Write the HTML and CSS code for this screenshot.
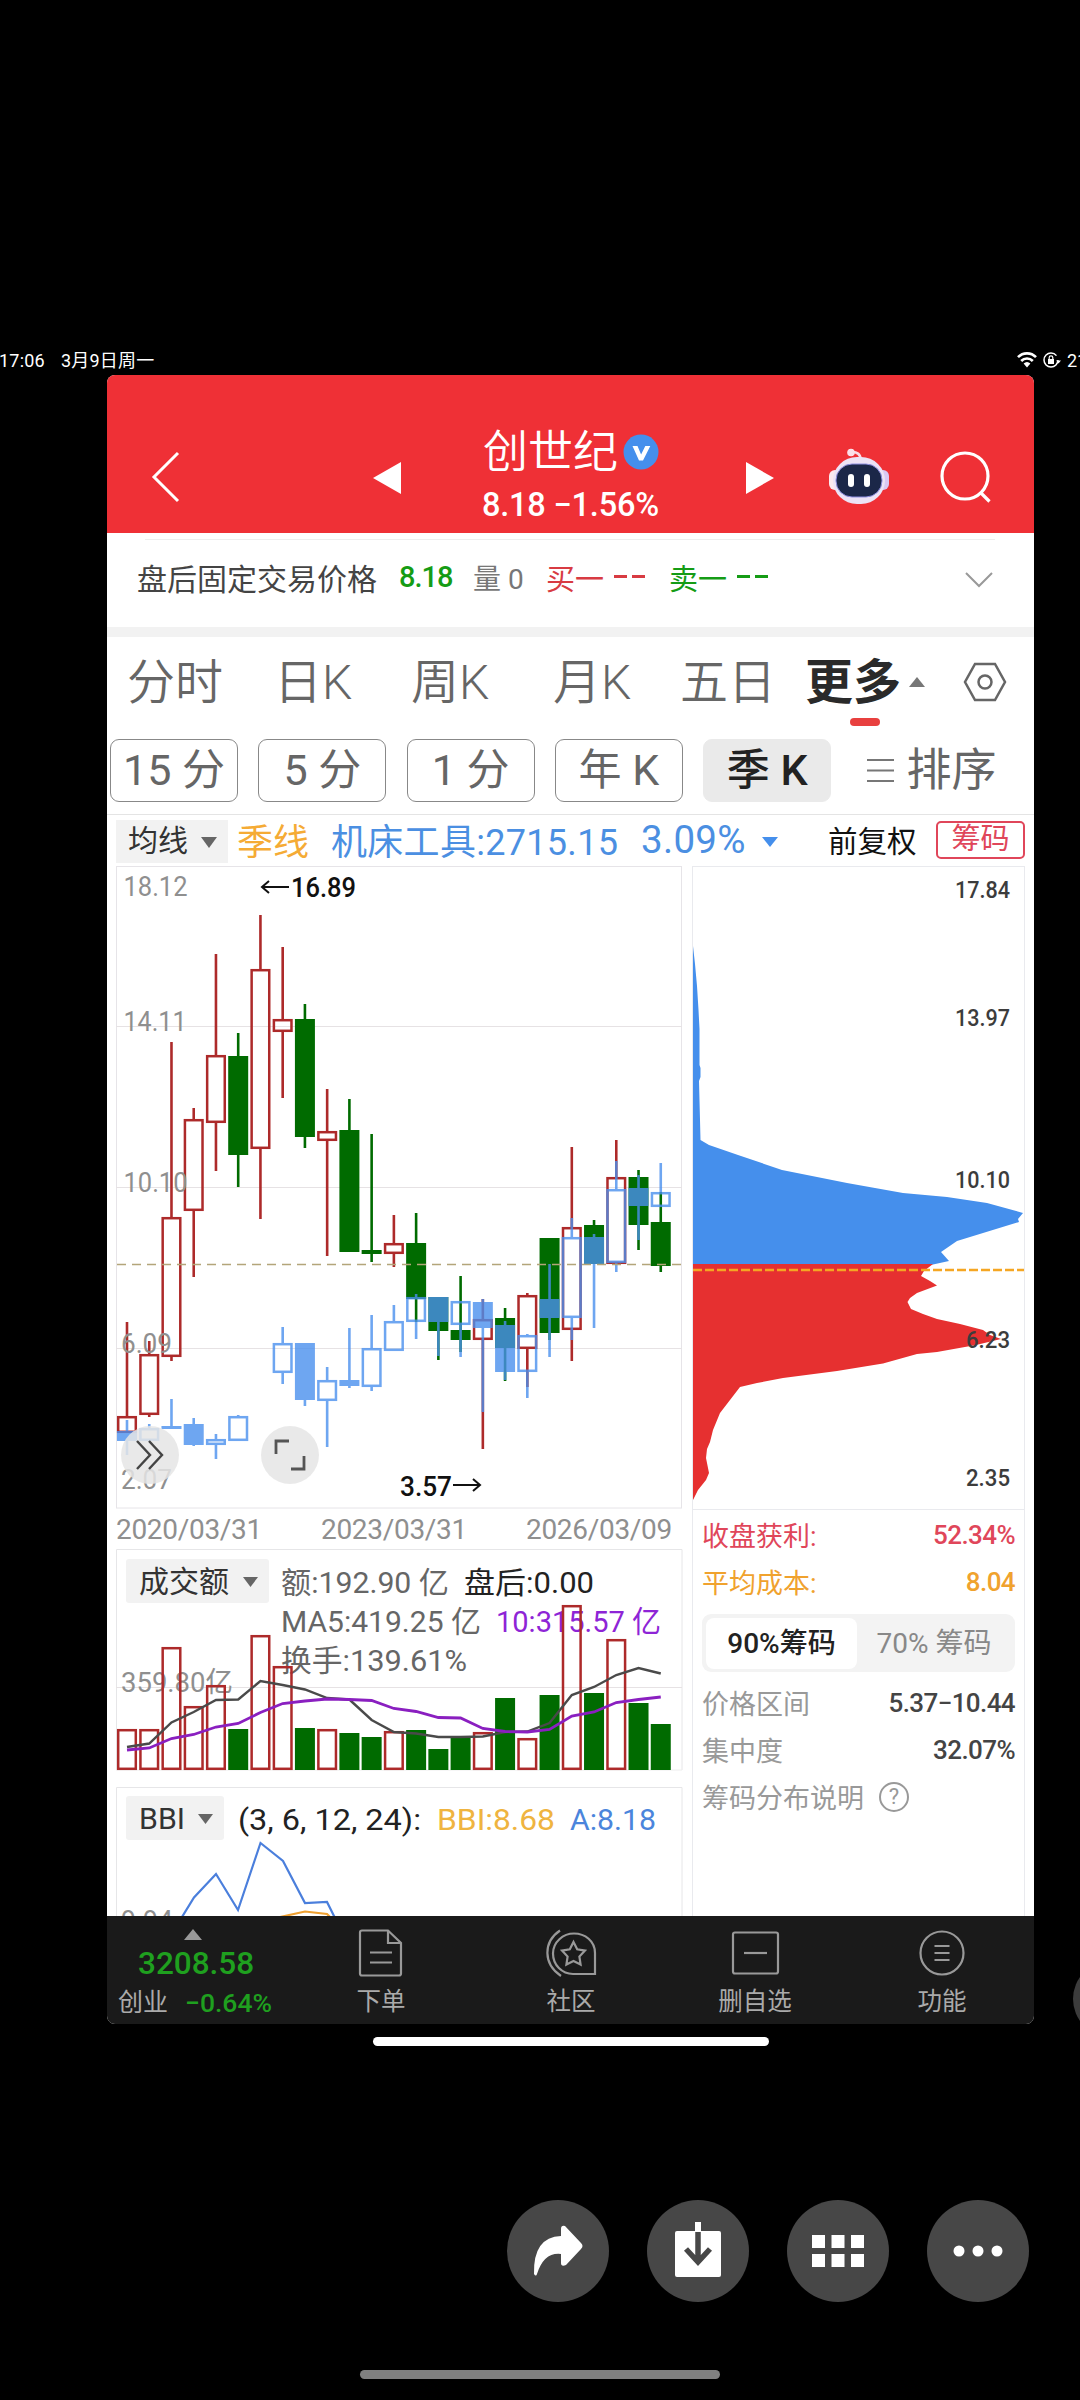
FILE: index.html
```html
<!DOCTYPE html>
<html lang="zh-CN">
<head>
<meta charset="utf-8">
<title>创世纪 8.18</title>
<link rel="stylesheet" href="styles.css">
</head>
<body>
<div class="status">
  <span class="status-time">17:06</span>
  <span class="status-date">3月9日周一</span>
  <svg class="status-icons" width="44" height="18" viewBox="0 0 44 18">
    <g fill="none" stroke="#fff" stroke-width="2.6"><path d="M1 6.2a12.5 12.5 0 0 1 18 0M4.2 10a8 8 0 0 1 11.6 0"/></g>
    <path d="M6.6 12.6a5 5 0 0 1 6.8 0L10 16.5z" fill="#fff"/>
    <circle cx="34" cy="9" r="7" fill="none" stroke="#fff" stroke-width="1.5" stroke-dasharray="39 5"/>
    <rect x="31" y="8" width="6" height="5" fill="#fff"/><path d="M32.2 8V6.6a1.8 1.8 0 0 1 3.6 0V8" fill="none" stroke="#fff" stroke-width="1.2"/>
    <path d="M39 9.5h5l-2.5 3z" fill="#fff"/>
  </svg>
  <span class="status-batt">21</span>
</div>

<main class="app">
  <header class="header">
    <svg class="back" width="30" height="52" viewBox="0 0 30 52"><path d="M27 2 3 26l24 24" fill="none" stroke="#fff" stroke-width="3"/></svg>
    <svg class="prev" width="28" height="32" viewBox="0 0 28 32"><path d="M28 0v32L0 16z" fill="#fff"/></svg>
    <div class="title">
      <div class="name">创世纪<svg width="36" height="36" viewBox="0 0 36 36"><circle cx="18" cy="18" r="17.5" fill="#458fec"/><path d="M9.5 12h5l3.6 8.5 4.2-8.5h5L20 26.500h-4z" fill="#fff"/></svg></div>
      <div class="quote">8.18 −1.56%</div>
    </div>
    <svg class="next" width="28" height="32" viewBox="0 0 28 32"><path d="M0 0v32l28-16z" fill="#fff"/></svg>
    <svg class="bot" width="60" height="58" viewBox="0 0 60 58">
      <path d="M22 4q9-1 10 8" fill="none" stroke="#f9dbe6" stroke-width="2.500"/><circle cx="22" cy="4.500" r="3.800" fill="#fbdfe9"/>
      <rect x="0" y="22" width="12" height="20" rx="6" fill="#fbe9ef"/><rect x="48" y="22" width="12" height="20" rx="6" fill="#d9c8f4"/>
      <rect x="4" y="9" width="52" height="47" rx="24" fill="#ece3f6"/>
      <rect x="7" y="16" width="46" height="33" rx="16" fill="#1b2748" stroke="#8f8fe0" stroke-width="1"/>
      <rect x="19" y="26" width="6" height="13" rx="3" fill="#fff"/><rect x="35" y="26" width="6" height="13" rx="3" fill="#fff"/>
    </svg>
    <svg class="search" width="54" height="54" viewBox="0 0 54 54"><g fill="none" stroke="#fff" stroke-width="3.200"><circle cx="26" cy="26" r="23"/><path d="m41.500 42.500 9 9"/></g></svg>
  </header>

  <section class="after">
    <span class="c-dark">盘后固定交易价格</span>
    <span class="c-green num">8.18</span>
    <span class="c-gray">量 0</span>
    <span class="c-red">买一 <i></i><i></i></span>
    <span class="c-green">卖一 <i></i><i></i></span>
    <svg width="30" height="18" viewBox="0 0 30 18"><path d="m2 2 13 13L28 2" fill="none" stroke="#999" stroke-width="2"/></svg>
  </section>
  <div class="band"></div>

  <nav class="tabs">
    <span>分时</span><span>日K</span><span>周K</span><span>月K</span><span>五日</span>
    <span class="on">更多<svg width="16" height="10" viewBox="0 0 16 10"><path d="M8 0l8 10H0z" fill="#777"/></svg></span>
    <svg class="gear" width="44" height="40" viewBox="0 0 44 40"><g fill="none" stroke="#666" stroke-width="2.500"><path d="M12 2h20l10 18-10 18H12L2 20z"/><circle cx="22" cy="20" r="6.500"/></g></svg>
  </nav>
  <nav class="pills">
    <span>15 分</span><span>5 分</span><span>1 分</span><span>年 K</span><span class="on">季 K</span>
    <span class="sort"><svg width="27" height="26" viewBox="0 0 27 26"><path d="M0 2h27M0 12.500h27M0 23h27" stroke="#777" stroke-width="2.200"/></svg>排序</span>
  </nav>
  <div class="legend">
    <span class="drop">均线<svg width="16" height="11" viewBox="0 0 16 11"><path d="M0 0h16L8 11z" fill="#666"/></svg></span>
    <span class="orange">季线</span>
    <span class="blue">机床工具:2715.15</span>
    <span class="blue rate">3.09%</span>
    <svg width="16" height="10" viewBox="0 0 16 10"><path d="M0 0h16L8 10z" fill="#458fec"/></svg>
    <span class="adj">前复权</span>
    <span class="chip-btn">筹码</span>
  </div>

  <div class="body">
    <div class="left">
      <div class="kline">
        <svg id="kline" width="568" height="644" viewBox="115 865 568 644"></svg>
        <button class="round r1"><svg width="30" height="30" viewBox="0 0 30 30"><path d="m2 1 13 14L2 29M14 1l13 14-13 14" fill="none" stroke="#444" stroke-width="2.400"/></svg></button>
        <button class="round r2"><svg width="32" height="32" viewBox="0 0 32 32"><path d="M2 15V2h13M30 17v13H17" fill="none" stroke="#555" stroke-width="2.800"/></svg></button>
      </div>
      <div class="dates"><span>2020/03/31</span><span>2023/03/31</span><span>2026/03/09</span></div>
      <svg id="volume" class="vol" width="568" height="224" viewBox="115 1548 568 224"></svg>
      <svg id="bbi" class="bbi" width="568" height="130" viewBox="115 1786 568 130"></svg>
    </div>
    <div class="right">
      <svg id="chips" width="333" height="643" viewBox="692 866 333 643"></svg>
      <div class="stats">
        <p class="c-pink"><span>收盘获利:</span><b>52.34%</b></p>
        <p class="c-amber"><span>平均成本:</span><b>8.04</b></p>
        <div class="seg"><span class="on">90%筹码</span><span>70% 筹码</span></div>
        <p class="c-light"><span>价格区间</span><b>5.37−10.44</b></p>
        <p class="c-light"><span>集中度</span><b>32.07%</b></p>
        <p class="c-light help"><span>筹码分布说明</span><em>?</em></p>
      </div>
    </div>
  </div>

  <footer class="nav">
    <div class="index">
      <svg width="18" height="11" viewBox="0 0 18 11"><path d="M9 0l9 11H0z" fill="#999"/></svg>
      <strong>3208.58</strong>
      <div><span>创业</span><span class="down">−0.64%</span></div>
    </div>
    <div class="item"><svg width="52" height="48" viewBox="0 0 52 48"><g fill="none" stroke="#999" stroke-width="2.200"><path d="M33 1.500H7q-2 0-2 2v41q0 2 2 2h37q2 0 2-2V14zV14h13M15 23.500h22M15 33.500h22"/></g></svg><span>下单</span></div>
    <div class="item"><svg width="52" height="48" viewBox="0 0 52 48"><g fill="none" stroke="#999" stroke-width="2.200"><path d="M50 45V24C50 12 40 4.500 29 4.500S8 13 8 24.500 17 45 28 45zM15 1.500C-2 13-2 35 16 47M28.500 13l3.700 7.300 7.800 1.300-5.600 6 1.200 8-7.100-3.500-7.100 3.500 1.200-8-5.600-6 7.800-1.300z"/></g></svg><span>社区</span></div>
    <div class="item"><svg width="52" height="48" viewBox="0 0 52 48"><g fill="none" stroke="#999" stroke-width="2.200"><rect x="4" y="3.500" width="45" height="41" rx="2"/><path d="M15 24h23"/></g></svg><span>删自选</span></div>
    <div class="item"><svg width="52" height="48" viewBox="0 0 52 48"><g fill="none" stroke="#999" stroke-width="2.200"><circle cx="26" cy="24" r="21.500"/><path d="M18.500 17h15M18.500 24h15M18.500 31h15"/></g></svg><span>功能</span></div>
  </footer>
</main>
<div class="home"></div>
<div class="edge-clip"><div class="edge"></div></div>

<div class="actions">
  <button><svg width="102" height="102" viewBox="0 0 102 102"><path d="M54 29q0-4 4-3l16 17q3 3 0 6L59 65q-5 2-5-2v-9Q37 52 30 74q-1 3-3 0Q26 37 54 36z" fill="#fff"/></svg></button>
  <button><svg width="102" height="102" viewBox="0 0 102 102"><rect x="28" y="31" width="46" height="46" rx="2" fill="#fff"/><path d="M48 22h6v9h-6z" fill="#fff"/><path d="M51 32v30M39 49l12 13 12-13" fill="none" stroke="#474747" stroke-width="5.500"/></svg></button>
  <button><svg width="102" height="102" viewBox="0 0 102 102"><path d="M25 35h13v13H25zM44.500 35h13v13h-13zM64 35h13v13H64zM25 54h13v13H25zM44.500 54h13v13h-13zM64 54h13v13H64z" fill="#fff"/></svg></button>
  <button><svg width="102" height="102" viewBox="0 0 102 102"><g fill="#fff"><circle cx="32" cy="51" r="5.500"/><circle cx="51" cy="51" r="5.500"/><circle cx="70" cy="51" r="5.500"/></g></svg></button>
</div>
<div class="gesture"></div>
<script src="charts.js"></script>
</body>
</html>
```
FILE: styles.css
```css
* { box-sizing: border-box; }
body {
  margin: 0; width: 1080px; height: 2400px; overflow: hidden; position: relative;
  display: flex; flex-direction: column; background: #000;
  font-family: Roboto, "Noto Sans CJK SC", sans-serif;
}
svg { display: block; flex: none; }
span { white-space: nowrap; }
button { border: 0; padding: 0; }

.status { height: 375px; flex: none; padding-top: 346px; display: grid; grid-template-columns: 61px 956px 50px 13px; color: #fff; font-size: 18px; line-height: 29px; overflow: hidden; }
.status-time { margin-left: -1px; letter-spacing: .2px; }
.status-date { letter-spacing: .2px; }
.status-icons { margin-top: 5px; }
.status-batt { overflow: hidden; }

.app { width: 927px; height: 1649px; margin-left: 107px; flex: none; background: #fff; border-radius: 8px; overflow: hidden; display: flex; flex-direction: column; }
.header { height: 158px; flex: none; background: #ef3036; color: #fff; display: grid; grid-template-columns: 44px 222px 110px 263px 83px 110px 95px; align-items: start; }
.back { grid-column: 2; margin-top: 76px; }
.prev { grid-column: 3; margin-top: 87px; }
.next { grid-column: 5; margin-top: 87px; }
.bot { grid-column: 6; margin-top: 73px; }
.search { grid-column: 7; margin-top: 75px; }
.title { grid-column: 4; padding-top: 51px; }
.name { display: flex; align-items: center; font-size: 45px; line-height: 54px; height: 54px; font-weight: 350; }
.name svg { margin: -2px 0 0 5px; }
.quote { font-size: 32.5px; line-height: 40px; font-weight: 500; margin: 5px 0 0 -1px; white-space: pre; letter-spacing: -.2px; }

.after { height: 94px; flex: none; padding: 0 0 7px 30px; display: grid; grid-template-columns: 262px 74px 73px 123px 295px 30px; align-items: center; font-size: 30px; background: linear-gradient(#eee, #eee) 38px 6px / 850px 1px no-repeat; }
.after svg { margin-top: 6px; }
.after .num { font-weight: 500; font-size: 29px; letter-spacing: -1px; }
.after .c-gray { font-size: 28px; }
.after .c-red, .after .c-green:not(.num) { font-size: 29px; display: flex; align-items: center; }
.after i { width: 13px; height: 3px; background: currentColor; margin-left: 10px; }
.after i + i { margin-left: 5px; }
.c-dark { color: #444; } .c-gray { color: #777; } .c-green { color: #159c15; } .c-red { color: #d83b42; }
.band { height: 10px; flex: none; background: #f2f2f2; }

.tabs { height: 102px; flex: none; padding: 0 0 20px 20px; display: grid; grid-template-columns: 147px 137px 142px 127px 125px 157px 60px; align-items: center; font-size: 48px; color: #666; font-weight: 350; }
.tabs .on { display: flex; align-items: center; font-weight: 700; color: #2a2a2a; position: relative; }
.tabs .on svg { margin: 8px 0 0 8px; }
.tabs .on::after { content: ""; position: absolute; left: 45px; bottom: -13px; width: 30px; height: 8px; border-radius: 4px; background: #e8403f; }
.gear { margin: 8px 0 0 1px; }

.pills { height: 76px; flex: none; padding: 0 0 12px 3px; display: grid; grid-template-columns: repeat(5, 128px) 140px; column-gap: 20.300px; font-size: 43px; color: #666; border-bottom: 1px solid #e4e4e4; }
.pills span { border: 1.500px solid #888; border-radius: 9px; line-height: 60px; text-align: center; }
.pills .on { background: #eaeaea; border-color: #eaeaea; color: #222; font-weight: 500; }
.pills .sort { border: 0; display: flex; align-items: center; gap: 12px; padding-left: 16px; font-size: 45px; }

.legend { height: 51px; flex: none; padding: 0 0 3px 9px; display: grid; grid-template-columns: 121px 94px 310px 121px 66px 108px 89px; align-items: center; font-size: 36px; }
.legend > svg { margin-top: 3px; }
.drop { width: 112px; height: 43px; background: #f2f2f2; display: flex; align-items: center; padding-left: 12px; gap: 13px; font-size: 30px; color: #333; line-height: 38px; padding-bottom: 2px; margin-top: 3px; }
.drop svg { margin-top: 3px; }
.orange { color: #f5ab35; margin-top: -2px; } .blue { color: #4b8fe2; margin-top: -2px; letter-spacing: .3px; }
.rate { font-size: 38.500px; }
.adj { font-size: 29.500px; color: #111; margin-top: -2px; }
.chip-btn { height: 38px; border: 2px solid #e0465a; border-radius: 5px; color: #e0465a; font-size: 29px; line-height: 33px; text-align: center; }

.body { height: 1050px; flex: none; display: flex; padding-left: 8px; gap: 9px; }
.left { width: 568px; display: flex; flex-direction: column; margin-top: -1px; }
.kline { position: relative; height: 644px; flex: none; }
.round { position: absolute; width: 58px; height: 58px; top: 561px; border-radius: 50%; background: rgba(229,229,229,.85); display: flex; align-items: center; justify-content: center; }
.r1 { left: 6px; } .r2 { left: 146px; }
.dates { height: 39px; flex: none; display: grid; grid-template-columns: 205px 205px 150px; padding-left: 1px; font-size: 28px; letter-spacing: -.3px; line-height: 41px; color: #8f8f8f; }
.vol { margin-bottom: 14px; }
.right { width: 333px; border: solid #e9eaee; border-width: 1px 1px 0 1px; }
#chips { margin: -1px 0 0 -1px; }
.stats { border-top: 1px solid #e9eaee; padding: 1px 9px 0 9px; font-size: 27px; }
.stats p { margin: 0; height: 47px; display: flex; align-items: center; justify-content: space-between; }
.stats b { font-weight: 500; font-size: 26px; letter-spacing: -.600px; }
.c-pink { color: #e0465a; } .c-amber { color: #f0a22e; } .c-light { color: #999; } .c-light b { color: #444; }
.seg { height: 58px; margin: 9px 0 7px; padding: 4px; background: #f3f3f3; border-radius: 9px; display: grid; grid-template-columns: 151px 1fr; line-height: 51px; text-align: center; color: #888; font-size: 28px; }
.seg .on { background: #fff; border-radius: 8px; color: #222; font-weight: 500; }
.stats .help { justify-content: flex-start; gap: 15px; }
.help em { width: 30px; height: 30px; border: 2px solid #999; border-radius: 50%; font-style: normal; font-size: 22px; line-height: 26px; text-align: center; }

.nav { height: 108px; flex: none; background: #1a1a1a; display: grid; grid-template-columns: 222px 190px 184px 187px 140px; color: #aaa; }
.index { padding: 13px 0 0 11px; }
.index svg { margin-left: 66px; }
.index strong { display: block; margin: 8px 0 3px 20px; font-size: 31.500px; font-weight: 500; color: #1fa01f; line-height: 32px; }
.index div { display: flex; gap: 17px; font-size: 25px; line-height: 40px; }
.index .down { color: #1fa01f; font-weight: 500; font-size: 26.500px; }
.item { display: flex; flex-direction: column; align-items: center; width: 104px; padding-top: 13px; font-size: 24.500px; line-height: 34px; }
.item span { margin: 8px 0 0 0; }

.home { width: 396px; height: 9px; border-radius: 5px; background: #fff; margin: 13px 0 0 373px; flex: none; }
.edge-clip { position: absolute; right: 0; top: 1961px; width: 7px; height: 76px; overflow: hidden; }
.edge { width: 76px; height: 76px; border-radius: 50%; background: #3c3c3c; }
.actions { display: flex; gap: 38px; margin: 154px 0 0 507px; flex: none; }
.actions button { width: 102px; height: 102px; border-radius: 50%; background: #474747; }
.gesture { width: 360px; height: 9px; border-radius: 5px; background: #808080; margin: 68px 0 0 360px; flex: none; }
```
FILE: charts.js
```js
const X0 = 127, STEP = 22.24, RED = '#ad2a2a', GREEN = '#006b00', BLUE = '#4b90ee';
const cx = i => X0 + STEP * i;
const line = (x1, y1, x2, y2, c, w = 1, extra = '') => `<path d="M${x1} ${y1}L${x2} ${y2}" stroke="${c}" stroke-width="${w}" fill="none" ${extra}/>`;
const text = (x, y, len, size, fill, s, extra = '') => `<text x="${x}" y="${y}" textLength="${len}" lengthAdjust="spacingAndGlyphs" font-size="${size}" fill="${fill}" ${extra}>${s}</text>`;
const poly = (pts, c, w) => `<polyline points="${pts}" fill="none" stroke="${c}" stroke-width="${w}"/>`;

function candle(i, high, top, bottom, low, color, filled) {
  const x = cx(i);
  let s = '';
  if (high < top) s += line(x, high, x, top, color, 2.6);
  if (low > bottom) s += line(x, bottom, x, low, color, 2.6);
  s += filled
    ? `<rect x="${x - 10}" y="${top}" width="20" height="${bottom - top}" fill="${color}"/>`
    : `<rect x="${x - 8.8}" y="${top + 1.2}" width="17.6" height="${bottom - top - 2.4}" fill="none" stroke="${color}" stroke-width="2.5"/>`;
  return s;
}

// index, high, body top, body bottom, low, rising
const price = [
  [0,1322,1416,1433,1433,1],[1,1341,1354,1415,1417,1],[2,1042,1217,1357,1361,1],[3,1108,1119,1211,1277,1],
  [4,954,1055,1123,1171,1],[5,1033,1056,1155,1187,0],[6,915,969,1149,1219,1],[7,947,1019,1032,1098,1],
  [8,1004,1019,1137,1148,0],[9,1089,1131,1141,1256,1],[10,1099,1130,1252,1252,0],[11,1134,1250,1254,1262,0],
  [12,1215,1243,1254,1267,1],[13,1213,1243,1299,1322,0],[14,1297,1297,1331,1360,0],[15,1276,1330,1340,1352,0],
  [16,1299,1319,1340,1449,1],[17,1308,1318,1348,1381,0],[18,1293,1295,1349,1387,1],[19,1238,1238,1333,1340,0],
  [20,1147,1227,1330,1361,1],[21,1220,1225,1264,1264,0],[22,1140,1177,1264,1264,1],[23,1170,1177,1225,1250,0],
  [24,1192,1222,1266,1272,0]
];
// index, high, body top, body bottom, low, filled
const sector = [
  [0,1420,1431,1441,1455,1],[1,1424,1428,1441,1441,0],[2,1399,1426,1429,1429,1],[3,1418,1424,1445,1446,1],
  [4,1434,1439,1445,1459,0],[5,1415,1416,1441,1441,0],[7,1327,1343,1373,1384,0],[8,1343,1343,1400,1406,1],
  [9,1367,1380,1401,1447,0],[10,1328,1380,1386,1388,1],[11,1315,1348,1387,1391,0],[12,1305,1321,1351,1351,0],
  [13,1294,1297,1322,1339,0],[14,1297,1297,1322,1356,1],[15,1301,1301,1325,1357,0],[16,1299,1302,1328,1412,1],
  [17,1321,1325,1372,1380,1],[18,1334,1335,1372,1398,0],[19,1264,1299,1318,1357,1],[20,1218,1237,1318,1340,0],
  [21,1234,1237,1264,1328,1],[22,1161,1189,1263,1272,0],[23,1175,1188,1206,1240,1],[24,1163,1192,1207,1207,0]
];

let k = '<rect x="116.500" y="866.500" width="565" height="641.500" fill="none" stroke="#e6e4e8"/>';
[1026.5, 1187.5, 1348.5].forEach(y => k += line(116, y, 682, y, '#e6e2e4'));
price.forEach(p => k += candle(p[0], p[1], p[2], p[3], p[4], p[5] ? RED : GREEN, !p[5]));
k += '<g opacity=".8">' + sector.map(p => candle(p[0], p[1], p[2], p[3], p[4], BLUE, p[5])).join('') + '</g>';
k += line(117, 1264.5, 682, 1264.5, '#b3a57a', 1.3, 'stroke-dasharray="9 6"');
k += text(123.5, 896, 64, 28, '#8f8f8f', '18.12') + text(123.5, 1031, 63, 28, '#8f8f8f', '14.11') + text(123.5, 1192, 64, 28, '#8f8f8f', '10.10')
   + text(121, 1353, 51, 28, '#8f8f8f', '6.09') + text(121, 1489, 51, 28, '#8f8f8f', '2.07');
k += text(291, 897, 65, 28, '#111', '16.89', 'font-weight="500"') + text(400, 1496, 52, 28, '#111', '3.57', 'font-weight="500"');
k += poly('289,887 262,887', '#111', 2) + poly('269,881 262,887 269,893', '#111', 2);
k += poly('453,1485 480,1485', '#111', 2) + poly('473,1479 480,1485 473,1491', '#111', 2);
document.getElementById('kline').innerHTML = k;

const bars = [[1729,1],[1729,1],[1647,1],[1706,1],[1685,1],[1729,0],[1635,1],[1666,1],[1728,0],[1729,1],[1733,0],[1737,0],
  [1731,1],[1730,0],[1749,0],[1736,0],[1732,1],[1698,0],[1738,1],[1695,0],[1605,1],[1693,0],[1639,1],[1703,0],[1724,0]];
const ma5 = [1747,1743.5,1722.5,1712,1700,1699.5,1681,1685,1689.5,1698,1699.5,1720,1732,1733.5,1737,1737,1736.5,1732,1731.5,1723,1695,1687,1675,1668,1673.5];
const ma10 = [1750,1748,1738.5,1734.5,1727,1723.5,1712.5,1703.5,1701,1699,1699.5,1700.5,1708.5,1711.5,1717.5,1718,1728.5,1731.5,1732,1729.5,1716,1712,1702.5,1699.5,1697];
const path = a => a.map((y, i) => `${cx(i)},${y}`).join(' ');
const dropdown = (y, w, tw, s) => `<rect x="126" y="${y}" width="${w}" height="44" rx="3" fill="#f2f2f2"/>` + text(139, y + 33, tw, 30, '#333', s)
  + `<path d="M${126 + w - 26} ${y + 18}h15l-7.500 10z" fill="#666"/>`;

let v = poly('116.5,1770 116.5,1549.5 682,1549.5 682,1770', '#e6e6e8', 1) + line(116, 1687.5, 682, 1687.5, '#e6e2e4') + line(116, 1770, 682, 1770, '#eee');
v += dropdown(1559, 143, 90, '成交额');
v += text(281, 1593, 168, 30, '#666', '额:192.90 亿') + text(464, 1593, 130, 30, '#222', '盘后:0.00')
   + text(281, 1632, 200, 30, '#666', 'MA5:419.25 亿') + text(496, 1632, 165, 30, '#8e24d6', '10:315.57 亿')
   + text(281, 1671, 186, 30, '#666', '换手:139.61%');
v += text(121, 1692, 112, 28, '#8f8f8f', '359.80亿');
bars.forEach(([y, up], i) => v += candle(i, y, y, 1770, 1770, up ? RED : GREEN, !up));
v += poly(path(ma5), '#4a4a4a', 2.4) + poly(path(ma10), '#8a1fc0', 2.8);
document.getElementById('volume').innerHTML = v;

let b = poly('116.5,1916 116.5,1787.5 682,1787.5 682,1916', '#e6e6e8', 1);
b += dropdown(1796, 98, 46, 'BBI');
b += text(238, 1830, 183, 30, '#222', '(3, 6, 12, 24):') + text(437, 1830, 118, 30, '#efb440', 'BBI:8.68') + text(570, 1830, 86, 30, '#4b85dc', 'A:8.18');
b += text(121, 1930, 52, 28, '#8f8f8f', '9.94');
b += poly('182,1917 194,1897.5 216,1874 238,1910 260.5,1843 283,1861 305,1903 327,1902 335,1918', '#4b7fdc', 2.2)
   + poly('280,1917 305,1911.5 327,1914 331,1918', '#efa030', 2.2);
document.getElementById('bbi').innerHTML = b;

let c = `<polygon fill="#458fec" points="693,946 695,964 697,986 698.5,1010 699.5,1029 699.5,1065 700.5,1068 700.5,1077 699,1081 700,1120 700.5,1140 709,1145 738,1155 782,1170 847,1183 903,1193 947,1197 987,1203 1023,1213 1018,1219 1019,1222 957,1241 941,1252 949,1261 933,1264.500 693,1264.500"/>`;
c += `<polygon fill="#e63030" points="693,1264 933,1264 924,1271 921,1276 930,1281 937,1285.500 917,1293 910,1298 907.500,1302 911,1309 923,1314 937,1319 960,1324 983,1330 990,1335 1001,1339 976,1345 937,1352 917,1354 883,1363.500 837,1371 783,1378 757,1383 740,1387 730,1400 720,1413 713,1430 710,1442 707,1449 706,1458 709,1473 706,1480 698,1490 693,1500"/>`;
c += line(693, 1270, 1024, 1270, '#f5a623', 2.4, 'stroke-dasharray="9 3"');
[['17.84', 955, 898], ['13.97', 955, 1026], ['10.10', 955, 1188], ['6.23', 966, 1348], ['2.35', 966, 1486]].forEach(([s, x, y]) => {
  c += text(x, y, 1010 - x, 24, '#3c3c3c', s, 'font-weight="500"');
});
document.getElementById('chips').innerHTML = c;
```
